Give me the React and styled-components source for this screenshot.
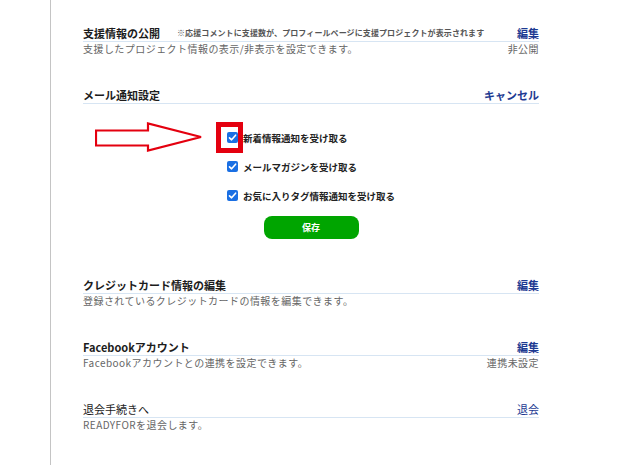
import React from "react";
import styled, { createGlobalStyle } from "styled-components";

const Global = createGlobalStyle`
  body {
    margin: 0;
    background: #fff;
    font-family: "Noto Sans CJK JP", "Noto Sans", sans-serif;
    color: #222;
  }
`;

const Page = styled.div`
  display: flex;
  align-items: flex-start;
`;

const Rail = styled.div`
  width: 50px;
  height: 465px;
  border-right: 1px solid #c4c4c4;
  flex-shrink: 0;
`;

const Content = styled.div`
  width: 456px;
  padding: 26px 0 0 32px;
`;

const Section = styled.section`
  margin-bottom: ${(p) => p.gap || 32}px;
`;

const Header = styled.div`
  display: flex;
  align-items: center;
  justify-content: space-between;
  height: 14px;
  line-height: 14px;
  padding-bottom: 1px;
  border-bottom: 1px solid #d7e5f3;
`;

const TitleWrap = styled.div`
  display: flex;
  align-items: center;
`;

const Title = styled.h3`
  margin: 0;
  font-size: 11px;
  font-weight: ${(p) => (p.light ? 400 : 700)};
  color: #1c1c1c;
`;

const Note = styled.span`
  margin-left: 17px;
  font-size: 8px;
  font-weight: 600;
  color: #555;
  letter-spacing: 0.1px;
`;

const Link = styled.a`
  font-size: 11px;
  font-weight: ${(p) => (p.light ? 400 : 700)};
  color: #1d3a92;
  text-decoration: none;
`;

const Desc = styled.div`
  display: flex;
  justify-content: space-between;
  font-size: 10px;
  line-height: 14px;
  letter-spacing: 0.45px;
  color: #666;
`;

const Form = styled.div`
  display: flex;
  flex-direction: column;
  align-items: center;
  padding-top: 19px;
`;

const List = styled.div`
  display: flex;
  flex-direction: column;
`;

const Item = styled.label`
  position: relative;
  display: flex;
  align-items: center;
  height: 29px;
  font-size: 9.5px;
  font-weight: 600;
  color: #222;
`;

const Box = styled.span`
  display: inline-flex;
  align-items: center;
  justify-content: center;
  width: 11px;
  height: 11px;
  margin-right: 5px;
  border-radius: 2px;
  background: #1a6fe3;
`;

const Highlight = styled.span`
  position: absolute;
  left: -11px;
  top: -1px;
  width: 17px;
  height: 21px;
  border: 5px solid #e4000f;
`;

const Arrow = styled.svg`
  position: absolute;
  left: -132px;
  top: -1px;
`;

const SaveButton = styled.button`
  margin-top: 6px;
  width: 95px;
  height: 23px;
  border: none;
  border-radius: 8px;
  background: #00a500;
  color: #fff;
  font-family: inherit;
  font-size: 9px;
  font-weight: 700;
`;

const Check = () => (
  <svg width="9" height="9" viewBox="0 0 9 9">
    <polyline points="1.5,4.8 3.6,6.8 7.6,2.2" fill="none" stroke="#fff" strokeWidth="1.6" strokeLinecap="round" strokeLinejoin="round" />
  </svg>
);

const options = [
  "新着情報通知を受け取る",
  "メールマガジンを受け取る",
  "お気に入りタグ情報通知を受け取る",
];

const sections = [
  { title: "クレジットカード情報の編集", link: "編集", desc: "登録されているクレジットカードの情報を編集できます。" },
  { title: "Facebookアカウント", link: "編集", desc: "Facebookアカウントとの連携を設定できます。", status: "連携未設定" },
  { title: "退会手続きへ", link: "退会", desc: "READYFORを退会します。", light: true },
];

export default function App() {
  return (
    <Page>
      <Global />
      <Rail />
      <Content>
        <Section>
          <Header>
            <TitleWrap>
              <Title>支援情報の公開</Title>
              <Note>※応援コメントに支援数が、プロフィールページに支援プロジェクトが表示されます</Note>
            </TitleWrap>
            <Link href="#">編集</Link>
          </Header>
          <Desc>
            <span>支援したプロジェクト情報の表示/非表示を設定できます。</span>
            <span>非公開</span>
          </Desc>
        </Section>

        <Section gap={39}>
          <Header>
            <Title>メール通知設定</Title>
            <Link href="#">キャンセル</Link>
          </Header>
          <Form>
            <List>
              {options.map((o, i) => (
                <Item key={o}>
                  <Box>
                    <Check />
                  </Box>
                  {o}
                  {i === 0 && (
                    <>
                      <Highlight />
                      <Arrow width="108" height="30" viewBox="0 0 108 30">
                        <polygon
                          points="1,8.5 53,8.5 53,1.5 106,15 53,28.5 53,23.5 1,23.5"
                          fill="#fff"
                          stroke="#e4000f"
                          strokeWidth="2.2"
                        />
                      </Arrow>
                    </>
                  )}
                </Item>
              ))}
            </List>
            <SaveButton>保存</SaveButton>
          </Form>
        </Section>

        {sections.map((s) => (
          <Section key={s.title}>
            <Header>
              <Title light={s.light}>{s.title}</Title>
              <Link href="#" light={s.light}>{s.link}</Link>
            </Header>
            <Desc>
              <span>{s.desc}</span>
              {s.status && <span>{s.status}</span>}
            </Desc>
          </Section>
        ))}
      </Content>
    </Page>
  );
}
